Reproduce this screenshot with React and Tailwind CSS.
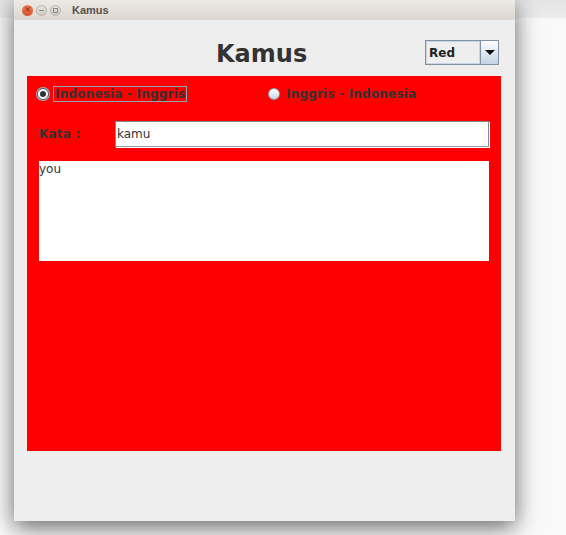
import React from "react";

function RadioDot({ checked }) {
  if (checked) {
    return (
      <span className="flex h-[12px] w-[12px] items-center justify-center rounded-full border border-[#4a5560] bg-white shadow-[0_0_0_1px_#9fb0c0]">
        <span className="h-[6px] w-[6px] rounded-full bg-[#2e3338]" />
      </span>
    );
  }
  return (
    <span className="h-[12px] w-[12px] rounded-full border border-[#8c9aa8] bg-gradient-to-b from-white to-[#c9d6e2]" />
  );
}

function TitleBar() {
  return (
    <div className="flex h-[20px] items-center rounded-t-[4px] bg-gradient-to-b from-[#edeae5] to-[#dcd6cf] pl-[8px]">
      <span className="flex h-[11px] w-[11px] items-center justify-center rounded-full bg-gradient-to-b from-[#f07a55] to-[#d9502a] text-[8px] leading-none text-[#7a2a12]">
        ×
      </span>
      <span className="ml-[3px] flex h-[11px] w-[11px] items-center justify-center rounded-full border border-[#b5b1ab] bg-gradient-to-b from-[#e6e3de] to-[#cfcbc5]">
        <span className="h-px w-[5px] bg-[#8d8983]" />
      </span>
      <span className="ml-[3px] flex h-[11px] w-[11px] items-center justify-center rounded-full border border-[#b5b1ab] bg-gradient-to-b from-[#e6e3de] to-[#cfcbc5]">
        <span className="h-[5px] w-[5px] border border-[#8d8983]" />
      </span>
      <span className="ml-[11px] font-['Liberation_Sans',sans-serif] text-[11px] font-bold text-[#55524d]">
        Kamus
      </span>
    </div>
  );
}

function ComboBox() {
  return (
    <div className="mt-[20px] mr-[2px] flex h-[25px] w-[74px] border border-[#7f93a5]">
      <div className="flex flex-1 items-center border border-[#c8d6e3] bg-[#eeeeee] pl-[2px] text-[12px] font-bold text-[#222222]">
        Red
      </div>
      <div className="flex w-[18px] items-center justify-center border-l border-[#7f93a5] bg-gradient-to-b from-white to-[#c3d3e3]">
        <span className="h-0 w-0 border-x-[5px] border-t-[5px] border-x-transparent border-t-[#111]" />
      </div>
    </div>
  );
}

export default function App() {
  return (
    <div className="relative h-[535px] w-[566px] overflow-hidden bg-[#f9f9f9] font-['DejaVu_Sans',sans-serif]">
      <div className="absolute left-0 top-0 h-[18px] w-full bg-gradient-to-b from-[#e4e4e4] to-[#ececec]" />

      <div className="absolute left-[14px] top-0 flex h-[521px] w-[501px] flex-col bg-[#eeeeee] shadow-[0_6px_22px_rgba(0,0,0,0.6)]">
        <TitleBar />

        <div className="flex flex-1 flex-col pl-[13px] pr-[14px]">
          <div className="flex h-[56px] items-start">
            <h1 className="ml-[189px] mt-[20px] text-[24px] font-bold leading-[28px] text-[#333333]">
              Kamus
            </h1>
            <div className="ml-auto">
              <ComboBox />
            </div>
          </div>

          <div className="flex h-[375px] flex-col bg-[#ff0000] pl-[10px]">
            <div className="mt-[10px] flex h-[16px] items-center text-[12px] font-bold tracking-[0.2px] text-[#333333]">
              <div className="flex w-[231px] items-center">
                <RadioDot checked />
                <span className="ml-[4px] border border-[#8ea3b6] px-[1px] leading-[14px]">
                  Indonesia - Inggris
                </span>
              </div>
              <div className="flex items-center">
                <RadioDot />
                <span className="ml-[6px] leading-[14px]">Inggris - Indonesia</span>
              </div>
            </div>

            <div className="mt-[19px] flex items-center">
              <span className="ml-[2px] w-[76px] text-[12px] font-bold tracking-[0.2px] text-[#333333]">
                Kata :
              </span>
              <div className="flex h-[26px] w-[374px] items-center border border-[#7d8c99] border-b-[#8e9ba6] bg-white pl-[1px] text-[12px] text-[#333333] shadow-[1px_1px_0_#ffffff]">
                kamu
              </div>
            </div>

            <div className="ml-[2px] mt-[14px] h-[100px] w-[450px] bg-white pt-[1px] text-[12px] leading-[15px] text-[#333333]">
              you
            </div>
          </div>
        </div>
      </div>
    </div>
  );
}
